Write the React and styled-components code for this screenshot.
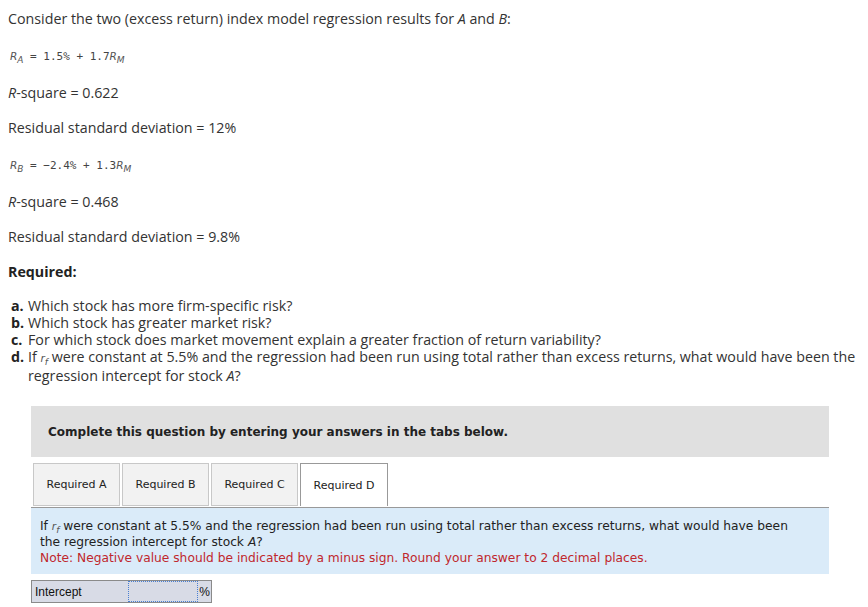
import styled, { createGlobalStyle } from 'styled-components';

const GlobalStyle = createGlobalStyle`
  body {
    margin: 0;
    background: #ffffff;
  }
`;

const Page = styled.div`
  width: 868px;
  padding: 9px 8px 0 8px;
  box-sizing: border-box;
  font-family: 'Open Sans', Lato, sans-serif;
  font-size: 14.25px;
  color: #333333;
`;

const Para = styled.p`
  margin: 0 0 16px 0;
  line-height: 19px;
`;

const Equation = styled.p`
  margin: 0 0 17px 0;
  padding: 3px 0 0 2px;
  line-height: 19px;
  font-family: 'DejaVu Sans Mono', 'Liberation Mono', monospace;
  font-size: 11px;
  color: #444444;
`;

const MathVar = styled.i`
  font-family: 'DejaVu Sans', sans-serif;
  font-size: 10.5px;
  color: #555555;
`;

const Sub = styled.sub`
  font-size: 9px;
  vertical-align: baseline;
  position: relative;
  top: 3px;
  font-style: italic;
  line-height: 0;
`;

const Heading = styled.p`
  margin: 0 0 16px 0;
  font-weight: 700;
  line-height: 19px;
  color: #222222;
`;

const List = styled.ol`
  list-style: none;
  margin: 0 0 22px 0;
  padding: 0 0 0 3px;
`;

const Item = styled.li`
  display: flex;
  line-height: 17px;
`;

const Letter = styled.b`
  flex: 0 0 17px;
  color: #222222;
`;

const Panel = styled.div`
  margin-left: 23px;
  width: 798px;
`;

const Banner = styled.div`
  background: #e0e0e0;
  height: 51px;
  display: flex;
  align-items: center;
  padding-left: 17px;
  font-family: 'DejaVu Sans', Verdana, sans-serif;
  font-size: 12px;
  font-weight: 700;
  color: #222222;
`;

const Tabs = styled.div`
  display: flex;
  gap: 2px;
  margin-top: 6px;
  padding-left: 2px;
`;

const Tab = styled.div`
  width: ${(p) => p.$w}px;
  height: 43px;
  box-sizing: border-box;
  display: flex;
  align-items: center;
  justify-content: center;
  font-family: 'DejaVu Sans', Verdana, sans-serif;
  font-size: 11px;
  color: #222222;
  background: ${(p) => (p.$active ? '#ffffff' : '#f2f2f2')};
  border: 1px solid ${(p) => (p.$active ? '#999999' : '#c8c8c8')};
  border-bottom: ${(p) => (p.$active ? 'none' : '1px solid #c8c8c8')};
  margin-bottom: ${(p) => (p.$active ? '1px' : '0')};
`;

const Body = styled.div`
  background: #daebf9;
  border-top: 1px solid #999999;
  padding: 10px 30px 8px 9px;
  font-family: 'DejaVu Sans', Verdana, sans-serif;
  font-size: 12.25px;
  line-height: 16px;
  color: #222222;
`;

const Note = styled.div`
  color: #c0272d;
`;

const AnswerRow = styled.div`
  display: flex;
  margin-top: 6px;
  width: 181px;
  height: 23px;
  border: 1px solid #8a8a8a;
  box-sizing: border-box;
  background: #d8dbe6;
  font-family: 'Liberation Sans', Arial, sans-serif;
  font-size: 12px;
  color: #111111;
`;

const Label = styled.div`
  width: 93px;
  padding-left: 3px;
  display: flex;
  align-items: center;
`;

const Input = styled.div`
  width: 68px;
  border: 1px dotted #4a7fd1;
  background: #d8dbe6;
`;

const Unit = styled.div`
  flex: 1;
  display: flex;
  align-items: center;
  justify-content: center;
`;

function Rf() {
  return (
    <MathVar>
      r<Sub>f</Sub>
    </MathVar>
  );
}

export default function App() {
  return (
    <Page>
      <GlobalStyle />
      <Para>
        Consider the two (excess return) index model regression results for <i>A</i> and <i>B</i>:
      </Para>
      <Equation>
        <MathVar>R<Sub>A</Sub></MathVar> = 1.5% + 1.7<MathVar>R<Sub>M</Sub></MathVar>
      </Equation>
      <Para>
        <i>R</i>-square = 0.622
      </Para>
      <Para>Residual standard deviation = 12%</Para>
      <Equation>
        <MathVar>R<Sub>B</Sub></MathVar> = −2.4% + 1.3<MathVar>R<Sub>M</Sub></MathVar>
      </Equation>
      <Para>
        <i>R</i>-square = 0.468
      </Para>
      <Para>Residual standard deviation = 9.8%</Para>
      <Heading>Required:</Heading>
      <List>
        <Item>
          <Letter>a.</Letter>
          <span>Which stock has more firm-specific risk?</span>
        </Item>
        <Item>
          <Letter>b.</Letter>
          <span>Which stock has greater market risk?</span>
        </Item>
        <Item>
          <Letter>c.</Letter>
          <span>For which stock does market movement explain a greater fraction of return variability?</span>
        </Item>
        <Item>
          <Letter>d.</Letter>
          <span>
            If <Rf /> were constant at 5.5% and the regression had been run using total rather than excess
            returns, what would have been the regression intercept for stock <i>A</i>?
          </span>
        </Item>
      </List>
      <Panel>
        <Banner>Complete this question by entering your answers in the tabs below.</Banner>
        <Tabs>
          <Tab $w={87}>Required A</Tab>
          <Tab $w={87}>Required B</Tab>
          <Tab $w={87}>Required C</Tab>
          <Tab $w={88} $active>
            Required D
          </Tab>
        </Tabs>
        <Body>
          If <Rf /> were constant at 5.5% and the regression had been run using total rather than excess returns, what
          would have been the regression intercept for stock <i>A</i>?
          <Note>Note: Negative value should be indicated by a minus sign. Round your answer to 2 decimal places.</Note>
        </Body>
        <AnswerRow>
          <Label>Intercept</Label>
          <Input />
          <Unit>%</Unit>
        </AnswerRow>
      </Panel>
    </Page>
  );
}
